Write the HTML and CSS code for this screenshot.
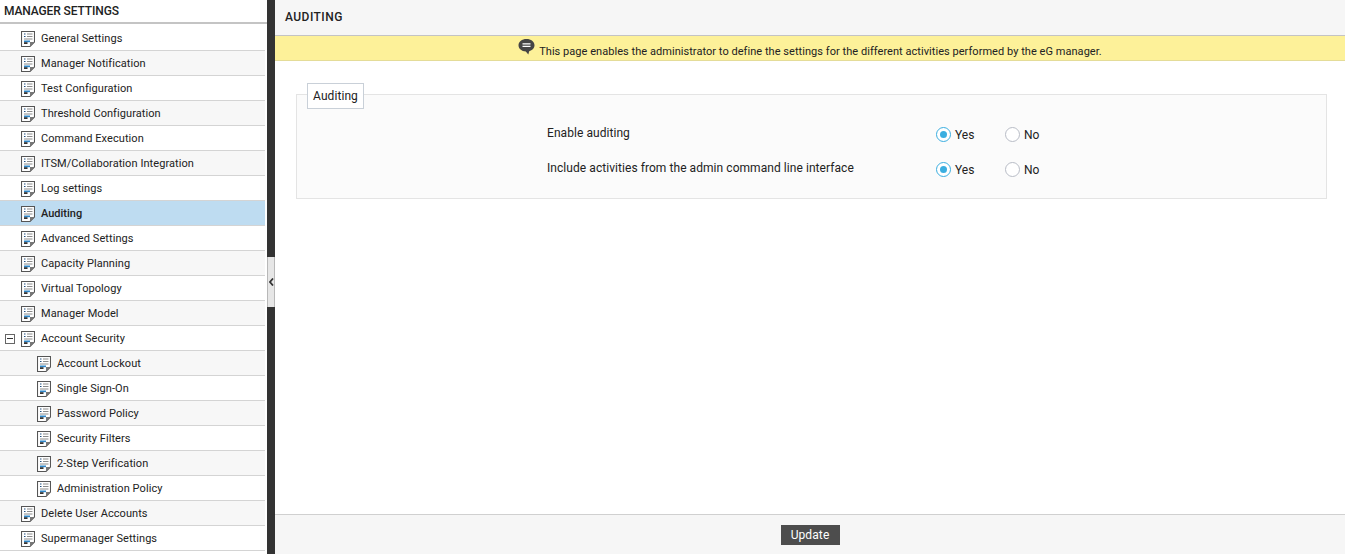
FILE: index.html
```html
<!DOCTYPE html>
<html lang="en">
<head>
<meta charset="utf-8">
<title>Manager Settings</title>
<link rel="stylesheet" href="styles.css">
</head>
<body>
<svg class="defs" width="0" height="0" aria-hidden="true">
  <symbol id="doc" viewBox="0 0 14 16">
    <path d="M.5.5h13v10.500l-4.500 4.500H.5z" fill="#fff" stroke="#555" stroke-width="1.100"/>
    <path d="M13 11H9v4z" fill="#777"/>
    <path d="M3 3h1.500M3 5.500h1.500" stroke="#1f4f80" stroke-width="1"/>
    <path d="M6 3h5.500M6 5.500h5.500M3 8h8.500" stroke="#8a8a8a" stroke-width="1"/>
    <path d="M3 9.500h6v1.700H3z" fill="#2f86c8"/>
    <path d="M3 11.200h3.500V13H3z" fill="#333"/>
  </symbol>
</svg>
<div class="app">
  <aside class="sidebar">
    <h2 class="side-title">MANAGER SETTINGS</h2>
    <ul class="menu">
      <li class="item first"><svg class="doc"><use href="#doc"/></svg>General Settings</li>
      <li class="item alt"><svg class="doc"><use href="#doc"/></svg>Manager Notification</li>
      <li class="item"><svg class="doc"><use href="#doc"/></svg>Test Configuration</li>
      <li class="item alt"><svg class="doc"><use href="#doc"/></svg>Threshold Configuration</li>
      <li class="item"><svg class="doc"><use href="#doc"/></svg>Command Execution</li>
      <li class="item alt"><svg class="doc"><use href="#doc"/></svg>ITSM/Collaboration Integration</li>
      <li class="item"><svg class="doc"><use href="#doc"/></svg>Log settings</li>
      <li class="item active"><svg class="doc"><use href="#doc"/></svg>Auditing</li>
      <li class="item"><svg class="doc"><use href="#doc"/></svg>Advanced Settings</li>
      <li class="item alt"><svg class="doc"><use href="#doc"/></svg>Capacity Planning</li>
      <li class="item"><svg class="doc"><use href="#doc"/></svg>Virtual Topology</li>
      <li class="item alt"><svg class="doc"><use href="#doc"/></svg>Manager Model</li>
      <li class="item parent"><span class="minus"></span><svg class="doc"><use href="#doc"/></svg>Account Security</li>
      <li class="item alt sub"><svg class="doc"><use href="#doc"/></svg>Account Lockout</li>
      <li class="item sub"><svg class="doc"><use href="#doc"/></svg>Single Sign-On</li>
      <li class="item alt sub"><svg class="doc"><use href="#doc"/></svg>Password Policy</li>
      <li class="item sub"><svg class="doc"><use href="#doc"/></svg>Security Filters</li>
      <li class="item alt sub"><svg class="doc"><use href="#doc"/></svg>2-Step Verification</li>
      <li class="item sub"><svg class="doc"><use href="#doc"/></svg>Administration Policy</li>
      <li class="item alt"><svg class="doc"><use href="#doc"/></svg>Delete User Accounts</li>
      <li class="item"><svg class="doc"><use href="#doc"/></svg>Supermanager Settings</li>
    </ul>
  </aside>
  <div class="splitter">
    <button class="collapse" type="button" aria-label="Collapse">
      <svg class="chev" width="5" height="8" viewBox="0 0 5 8"><path d="M4 .5L1 4l3 3.500" fill="none" stroke="#333" stroke-width="1.800"/></svg>
    </button>
  </div>
  <main class="content">
    <header class="page-head">AUDITING</header>
    <div class="notice">
      <svg class="bubble" width="17" height="16" viewBox="0 0 17 16"><path d="M8.500 0C13 0 16.500 2.600 16.500 6.300c0 3-2.300 5.200-5.300 5.900L10.300 15.500 7.800 12.500C3.600 12.300.5 9.800.5 6.300.5 2.600 4 0 8.500 0z" fill="#454545"/><path d="M4.500 4.800h8M4.500 7.300h8" stroke="#fff" stroke-width="1.300"/></svg>
      <span>This page enables the administrator to define the settings for the different activities performed by the eG manager.</span>
    </div>
    <div class="body">
      <section class="fieldset">
        <div class="legend">Auditing</div>
        <div class="row">
          <div class="label">Enable auditing</div>
          <div class="radios"><span class="radio on"></span><span class="opt">Yes</span><span class="radio"></span><span class="opt">No</span></div>
        </div>
        <div class="row">
          <div class="label">Include activities from the admin command line interface</div>
          <div class="radios"><span class="radio on"></span><span class="opt">Yes</span><span class="radio"></span><span class="opt">No</span></div>
        </div>
      </section>
    </div>
    <footer class="foot"><button class="update" type="button">Update</button></footer>
  </main>
</div>
</body>
</html>
```
FILE: styles.css
```css
* { box-sizing: border-box; }
html, body { margin: 0; height: 100%; overflow: hidden; }
body { font-family: Roboto, "Liberation Sans", sans-serif; color: #222; background: #fff; }
.defs { position: absolute; }
.app { display: flex; height: 554px; }

.sidebar { width: 267px; flex: none; overflow: hidden; background: #fff; }
.side-title { margin: 0; height: 24px; padding: 4px 0 0 4px; font-size: 12px; line-height: 14px; font-weight: 500; letter-spacing: -.12px; color: #222; border-bottom: 2px solid #c4c4c4; }
.menu { list-style: none; margin: 0; padding: 0; width: 265px; }
.item { display: flex; align-items: center; height: 25px; padding: 1px 0 0 21px; font-size: 11px; letter-spacing: .07px; color: #222; border-bottom: 1px solid #d4d4d4; background: #fff; }
.item.first { height: 27px; padding-top: 3px; }
.item.alt { background: #f7f7f7; }
.item.active { background: #bedcf1; font-weight: 500; letter-spacing: 0; }
.item.sub { padding-left: 37px; }
.item.parent { padding-left: 5px; }
.doc { width: 14px; height: 16px; margin-right: 6px; flex: none; }
.minus { position: relative; width: 10px; height: 10px; margin-right: 6px; border: 1.500px solid #666; flex: none; }
.minus::after { content: ""; position: absolute; left: 1px; right: 1px; top: 3px; height: 1px; background: #333; }

.splitter { width: 8px; flex: none; background: #333; position: relative; }
.collapse { position: absolute; left: 0; top: 257px; width: 8px; height: 50px; padding: 0; display: flex; align-items: center; justify-content: center; background: #e6e6e6; border: 0 solid #b8b8b8; border-width: 0 1px; }
.chev { flex: none; }

.content { flex: 1; display: flex; flex-direction: column; min-width: 0; }
.page-head { height: 36px; padding: 10px 0 0 10px; font-size: 12px; line-height: 14px; font-weight: 500; letter-spacing: .45px; background: #f6f6f6; border-bottom: 1px solid #c4c4c4; }
.notice { height: 25px; display: flex; align-items: flex-start; justify-content: center; font-size: 11px; letter-spacing: .045px; background: #fdf199; border-bottom: 1px solid #e4dc98; }
.notice span { margin-top: 9px; line-height: 13px; margin-left: 4px; }
.bubble { margin-top: 3px; }

.body { flex: 1; padding: 33px 18px 0 21px; }
.fieldset { position: relative; height: 105px; padding-top: 31px; background: #fbfbfb; border: 1px solid #e4e4e4; }
.legend { position: absolute; left: 10px; top: -12px; height: 26px; width: 57px; text-align: center; font-size: 12px; line-height: 24px; letter-spacing: .06px; background: #fff; border: 1px solid #c9d0d8; }
.row { display: flex; height: 35px; }
.label { width: 389px; margin-left: 250px; font-size: 12px; line-height: 14px; letter-spacing: .06px; }
.radios { display: flex; align-items: center; height: 17px; font-size: 12px; }
.radio { position: relative; width: 15px; height: 15px; border-radius: 50%; border: 1px solid #b8bcc6; background: #fff; }
.radio.on { border-color: #3aaee0; }
.radio.on::after { content: ""; position: absolute; left: 3px; top: 3px; width: 7px; height: 7px; border-radius: 50%; background: #3aaee0; }
.opt { margin-left: 4px; width: 50px; }

.foot { height: 40px; display: flex; justify-content: center; align-items: flex-start; padding-top: 10px; background: #f6f6f6; border-top: 1px solid #d0d0d0; }
.update { width: 59px; height: 20px; padding: 0; font: 12px Roboto, sans-serif; letter-spacing: .1px; color: #fff; background: #4d4d4d; border: 0; }
```
